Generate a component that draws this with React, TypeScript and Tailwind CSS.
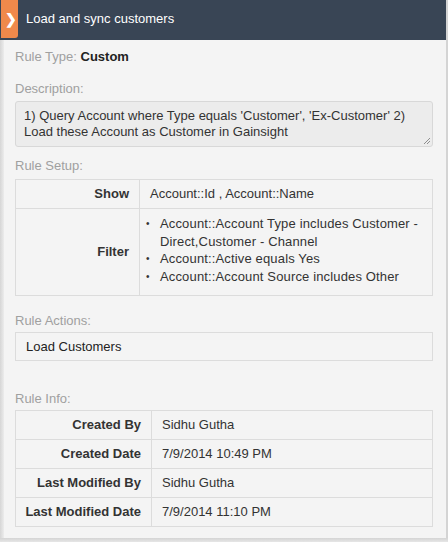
import React from "react";

const font = { fontFamily: '"Liberation Sans", Arial, Helvetica, sans-serif' };

function Label({ children }: { children: React.ReactNode }) {
  return <div className="text-[13px] leading-[16px] text-[#a0a0a0]">{children}</div>;
}

export default function App() {
  const info = [
    ["Created By", "Sidhu Gutha"],
    ["Created Date", "7/9/2014 10:49 PM"],
    ["Last Modified By", "Sidhu Gutha"],
    ["Last Modified Date", "7/9/2014 11:10 PM"],
  ];
  return (
    <div style={font} className="w-[448px] h-[542px] bg-[#dcdcdc] flex flex-col overflow-hidden">
      <div className="flex-1 flex min-h-0">
        <div className="w-[4px] bg-gradient-to-r from-[#d6d6d6] to-[#ececec]" />
        <div className="flex-1 flex flex-col bg-[#f4f4f4] min-w-0">
          <div className="h-[40px] bg-[#394555] flex items-start -ml-[4px] relative">
            <div className="w-[17px] h-[38px] ml-[1px] bg-[#f0894b] rounded-br-[3px] flex items-center justify-center text-white text-[14px] font-bold pl-[2px]">
              ❯
            </div>
            <div className="h-[38px] flex items-center pl-[8px] text-white text-[13px]">Load and sync customers</div>
          </div>
          <div className="pl-[11px] pr-[13px] pt-[9px] flex flex-col">
            <div className="text-[13px] leading-[16px]">
              <span className="text-[#a0a0a0]">Rule Type: </span>
              <span className="font-bold text-[#222]">Custom</span>
            </div>
            <div className="mt-[16px]">
              <Label>Description:</Label>
            </div>
            <div className="mt-[4px] relative h-[46px] bg-[#ececec] border border-[#d8d8d8] rounded-[3px] px-[8px] pt-[6px] text-[13px] leading-[16px] text-[#333]">
              1) Query Account where Type equals 'Customer', 'Ex-Customer' 2) Load these Account as Customer in Gainsight
              <svg className="absolute right-[1px] bottom-[1px]" width="8" height="8" viewBox="0 0 8 8">
                <line x1="7" y1="1" x2="1" y2="7" stroke="#777" strokeWidth="0.8" />
                <line x1="7" y1="4" x2="4" y2="7" stroke="#777" strokeWidth="0.8" />
              </svg>
            </div>
            <div className="mt-[11px]">
              <Label>Rule Setup:</Label>
            </div>
            <table className="mt-[5px] w-full border-collapse text-[13px] text-[#333]">
              <tbody>
                <tr className="h-[29px]">
                  <td className="w-[124px] border border-[#dcdcdc] text-right font-bold pr-[10px]">Show</td>
                  <td className="border border-[#dcdcdc] pl-[10px]">Account::Id , Account::Name</td>
                </tr>
                <tr>
                  <td className="border border-[#dcdcdc] text-right font-bold pr-[10px]">Filter</td>
                  <td className="border border-[#dcdcdc] pl-[6px] pt-[6px] pb-[10px]">
                    <ul className="leading-[17.5px]">
                      {[
                        "Account::Account Type includes Customer - Direct,Customer - Channel",
                        "Account::Active equals Yes",
                        "Account::Account Source includes Other",
                      ].map((t) => (
                        <li key={t} className="flex">
                          <span className="w-[14px] shrink-0 text-[10px]">•</span>
                          <span className="tracking-[0.15px]">{t}</span>
                        </li>
                      ))}
                    </ul>
                  </td>
                </tr>
              </tbody>
            </table>
            <div className="mt-[17px]">
              <Label>Rule Actions:</Label>
            </div>
            <div className="mt-[3px] h-[29px] border border-[#dcdcdc] flex items-center pl-[10px] text-[13px] text-[#222]">
              Load Customers
            </div>
            <div className="mt-[30px]">
              <Label>Rule Info:</Label>
            </div>
            <table className="mt-[3px] w-full border-collapse text-[13px] text-[#333]">
              <tbody>
                {info.map(([k, v]) => (
                  <tr key={k} className="h-[29px]">
                    <td className="w-[136px] border border-[#dcdcdc] text-right font-bold pr-[10px]">{k}</td>
                    <td className="border border-[#dcdcdc] pl-[10px]">{v}</td>
                  </tr>
                ))}
              </tbody>
            </table>
          </div>
        </div>
        <div className="w-[2px] bg-[#d4d4d4]" />
      </div>
      <div className="h-[4px] bg-gradient-to-b from-[#d4d4d4] to-[#e6e6e6]" />
    </div>
  );
}
